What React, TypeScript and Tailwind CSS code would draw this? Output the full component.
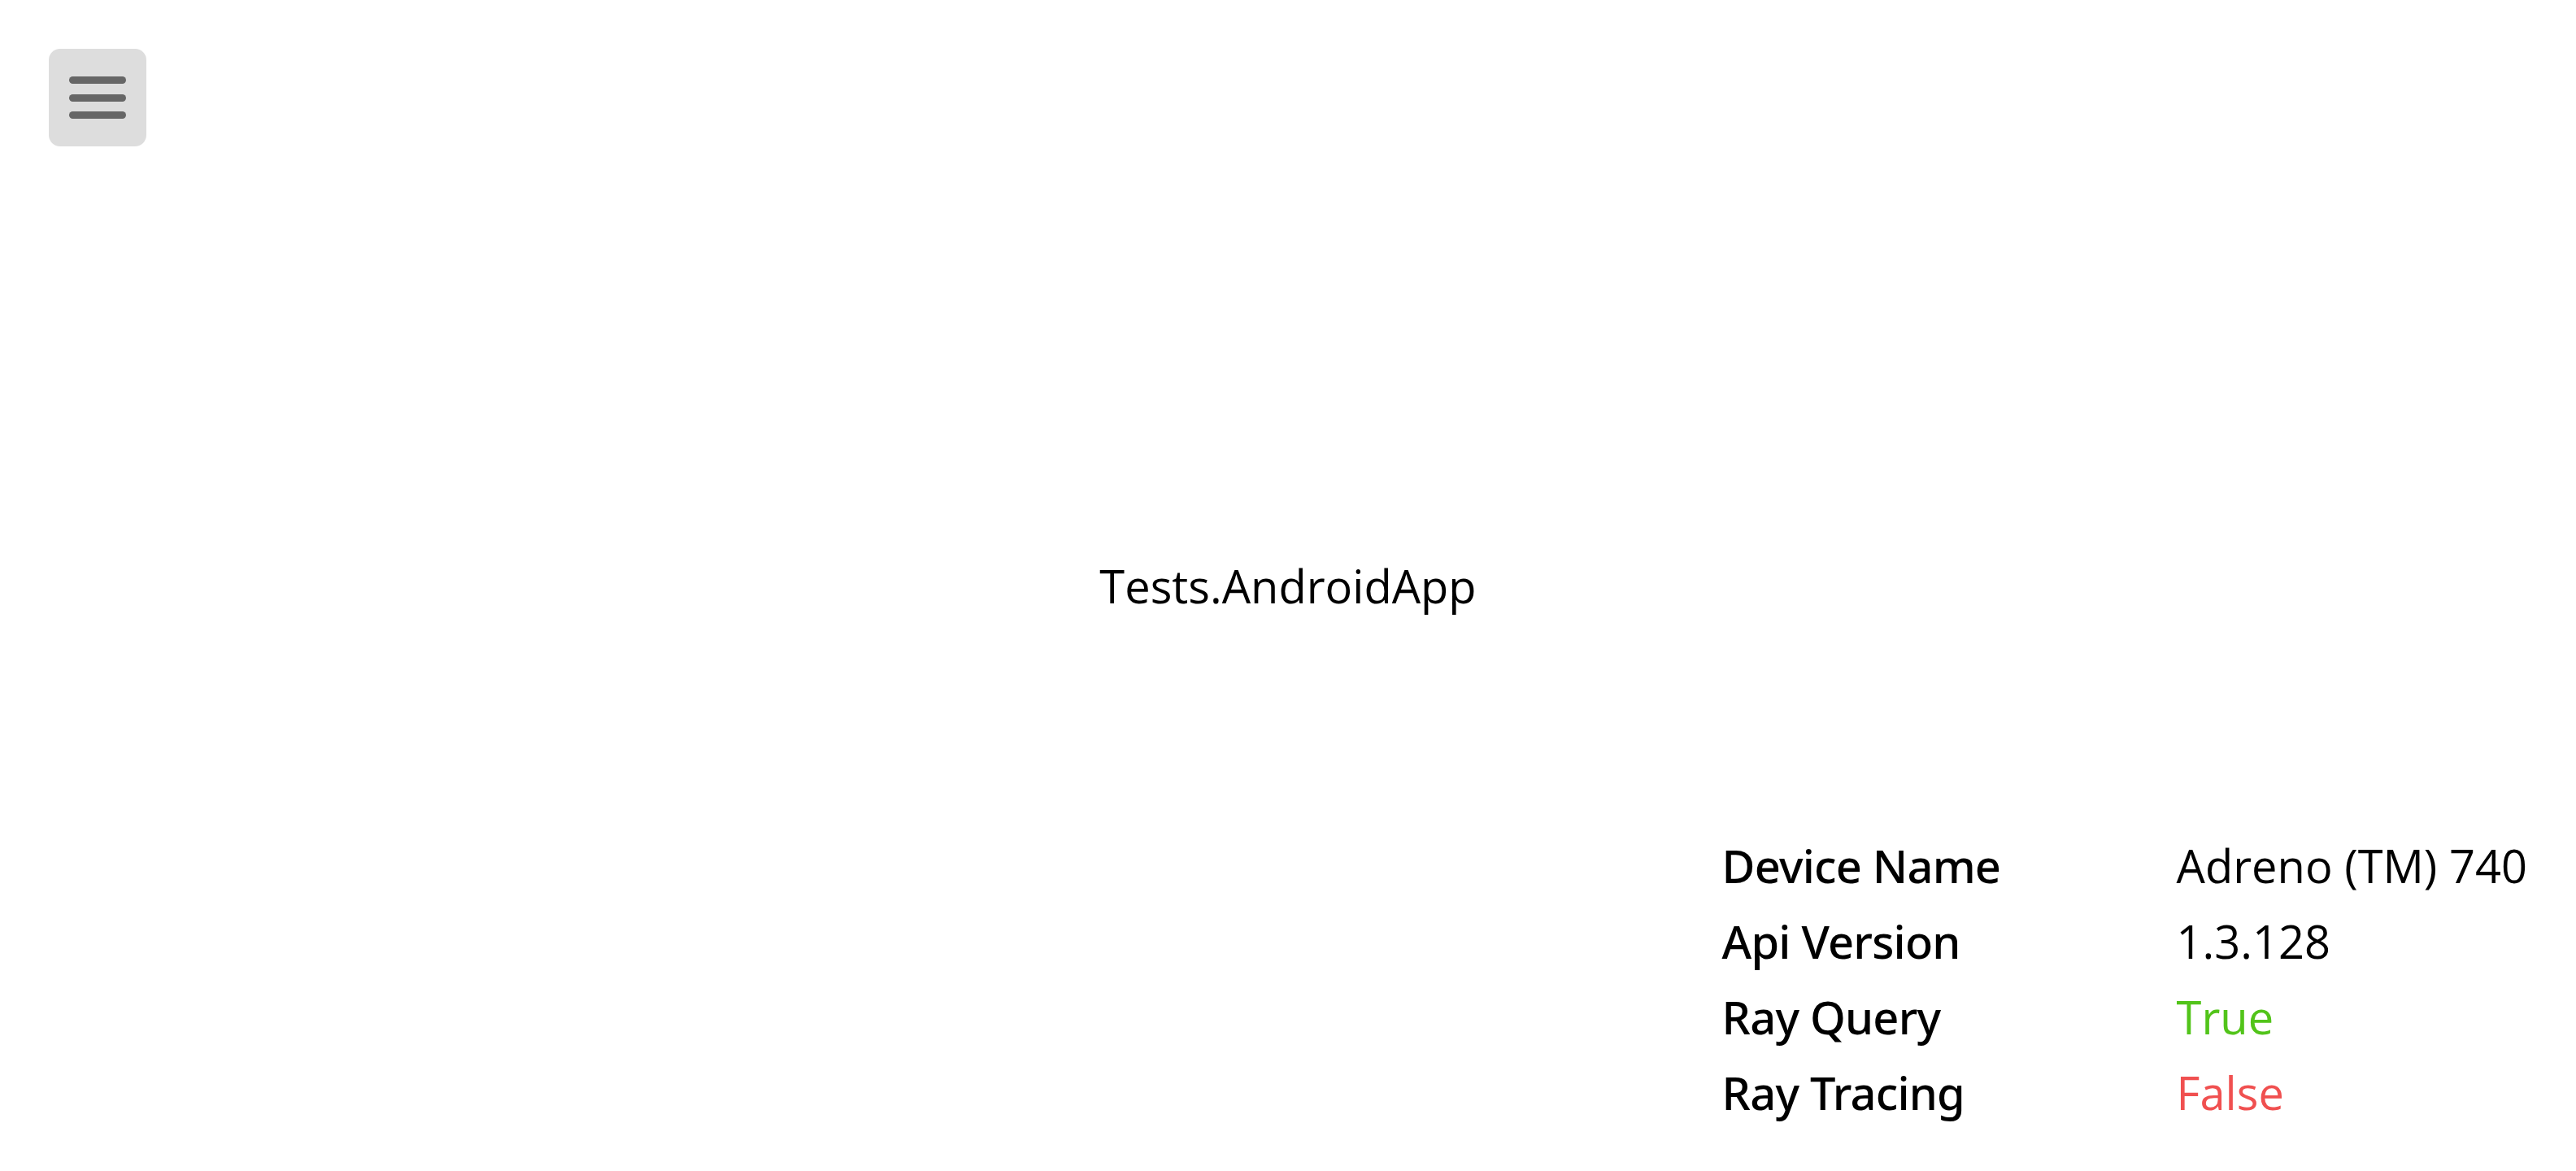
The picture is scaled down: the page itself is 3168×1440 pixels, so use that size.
import React from "react";

const rows: { label: string; value: string; color: string }[] = [
  { label: "Device Name", value: "Adreno (TM) 740", color: "text-black" },
  { label: "Api Version", value: "1.3.128", color: "text-black" },
  { label: "Ray Query", value: "True", color: "text-[#52c41a]" },
  { label: "Ray Tracing", value: "False", color: "text-[#f05050]" },
];

export default function App() {
  return (
    <div
      className="grid h-screen w-full grid-rows-[1fr_auto_1fr] bg-white text-black"
      style={{ fontFamily: '"Open Sans", "Noto Sans", sans-serif' }}
    >
      <div className="pl-[60px] pt-[60px]">
        <button className="flex h-[120px] w-[120px] flex-col items-center justify-center gap-[12.5px] rounded-[14px] bg-[#dddddd]">
          <span className="block h-[9px] w-[70px] rounded-full bg-[#666666]" />
          <span className="block h-[9px] w-[70px] rounded-full bg-[#666666]" />
          <span className="block h-[9px] w-[70px] rounded-full bg-[#666666]" />
        </button>
      </div>
      <div className="text-center text-[56px] leading-[93px]">Tests.AndroidApp</div>
      <div className="flex items-end justify-end pb-[50px] pr-[60px]">
        <div className="grid grid-cols-[559px_auto] text-[56px] leading-[93px]">
          {rows.map((r) => (
            <React.Fragment key={r.label}>
              <div
                className="font-medium tracking-[-0.8px]"
                style={{ fontFamily: '"Noto Sans", "Open Sans", sans-serif' }}
              >
                {r.label}
              </div>
              <div className={r.color}>{r.value}</div>
            </React.Fragment>
          ))}
        </div>
      </div>
    </div>
  );
}
